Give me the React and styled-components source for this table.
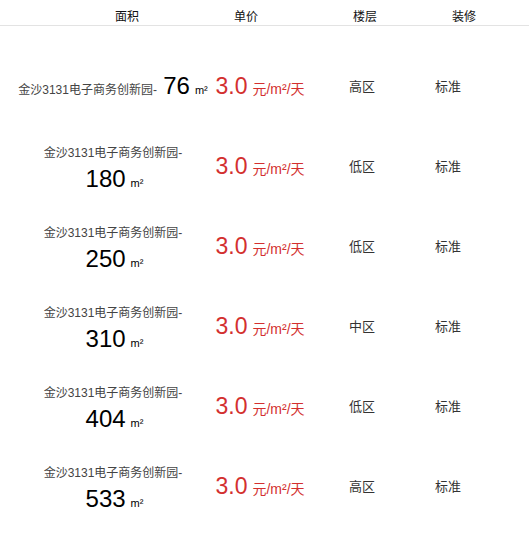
import React from 'react';
import styled, { createGlobalStyle } from 'styled-components';

const rooms = [
  { id: 1, name: '金沙3131电子商务创新园-', area: 76, floor: '高区', deco: '标准' },
  { id: 2, name: '金沙3131电子商务创新园-', area: 180, floor: '低区', deco: '标准' },
  { id: 3, name: '金沙3131电子商务创新园-', area: 250, floor: '低区', deco: '标准' },
  { id: 4, name: '金沙3131电子商务创新园-', area: 310, floor: '中区', deco: '标准' },
  { id: 5, name: '金沙3131电子商务创新园-', area: 404, floor: '低区', deco: '标准' },
  { id: 6, name: '金沙3131电子商务创新园-', area: 533, floor: '高区', deco: '标准' },
];

const GlobalStyle = createGlobalStyle`
  html, body {
    margin: 0;
    padding: 0;
    background: #fff;
  }
  body {
    font-family: "Liberation Sans", "Noto Sans CJK SC", sans-serif;
  }
`;

const App = () => {
  return (
    <Page>
      <GlobalStyle />
      <Header>
        <HeadCell center={127}>面积</HeadCell>
        <HeadCell center={246}>单价</HeadCell>
        <HeadCell center={365}>楼层</HeadCell>
        <HeadCell center={464}>装修</HeadCell>
      </Header>

      <List>
        {rooms.map(room => (
          <Row key={room.id}>
            <AreaCell>
              {room.name}{' '}
              <Area>
                {room.area}
                <Unit>m²</Unit>
              </Area>
            </AreaCell>
            <PriceCell>
              <Price>3.0</Price>
              <PriceUnit>元/m²/天</PriceUnit>
            </PriceCell>
            <FloorCell>{room.floor}</FloorCell>
            <DecoCell>{room.deco}</DecoCell>
          </Row>
        ))}
      </List>
    </Page>
  );
};

const Page = styled.div`
  width: 529px;
  min-height: 534px;
  background: #fff;
`;

const Header = styled.div`
  position: relative;
  height: 25px;
  border-bottom: 1px solid #e3e3e3;
`;

// header labels sit over columns that don't line up with the rows below
const HeadCell = styled.span`
  position: absolute;
  top: 9px;
  left: ${props => props.center}px;
  transform: translateX(-50%);
  font-family: "Noto Sans CJK SC", sans-serif;
  font-size: 12px;
  line-height: 14px;
  color: #111;
  white-space: nowrap;
`;

const List = styled.div`
  display: flex;
  flex-direction: column;
  padding-top: 19px;
`;

const Row = styled.div`
  display: flex;
  align-items: center;
  height: 80px;
`;

const AreaCell = styled.div`
  box-sizing: border-box;
  width: 210px;
  padding: 6px 2px 0 18px;
  text-align: center;
  font-family: "Liberation Sans", "Noto Sans CJK SC", sans-serif;
  font-size: 12px;
  line-height: 26px;
  color: #444;
`;

const Area = styled.span`
  white-space: nowrap;
  font-family: "Liberation Sans", sans-serif;
  font-size: 24px;
  color: #000;
  margin-left: 3px;
`;

const Unit = styled.span`
  font-family: "Liberation Sans", sans-serif;
  font-size: 11px;
  margin-left: 5px;
  color: #000;
`;

const PriceCell = styled.div`
  width: 100px;
  padding-top: 3px;
  text-align: center;
  white-space: nowrap;
  color: #d3302f;
`;

const Price = styled.span`
  font-family: "Liberation Sans", sans-serif;
  font-size: 23px;
`;

const PriceUnit = styled.span`
  font-family: "Liberation Sans", "Noto Sans CJK SC", sans-serif;
  font-size: 14px;
  margin-left: 5px;
`;

const FloorCell = styled.div`
  width: 104px;
  text-align: center;
  font-family: "Noto Sans CJK SC", sans-serif;
  font-size: 13px;
  color: #333;
`;

const DecoCell = styled.div`
  width: 68px;
  text-align: center;
  font-family: "Noto Sans CJK SC", sans-serif;
  font-size: 13px;
  color: #333;
`;

export default App;
